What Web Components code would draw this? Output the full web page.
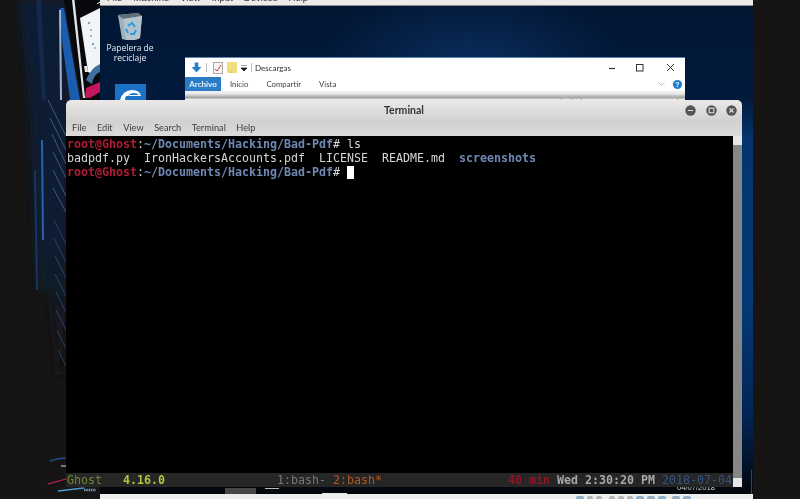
<!DOCTYPE html>
<html>
<head>
<meta charset="utf-8">
<title>Terminal</title>
<style>
html, body { margin: 0; padding: 0; background: #161514; overflow: hidden; }
</style>
</head>
<body>
<x-desktop>
  <x-host-art></x-host-art>
  <x-vm>
    <x-desk-icon label="Papelera de reciclaje"></x-desk-icon>
    <x-explorer></x-explorer>
  </x-vm>
  <x-terminal title="Terminal">
    <x-term-line><b class="r">root@Ghost</b>:<b class="p">~/Documents/Hacking/Bad-Pdf</b># ls</x-term-line>
    <x-term-line>badpdf.py  IronHackersAccounts.pdf  LICENSE  README.md  <b class="p">screenshots</b></x-term-line>
    <x-term-line><b class="r">root@Ghost</b>:<b class="p">~/Documents/Hacking/Bad-Pdf</b># <i class="c"></i></x-term-line>
  </x-terminal>
</x-desktop>

<script>
// outer page, holds everything on a free canvas
class XDesktop extends HTMLElement {
  constructor() {
    super();
    this.attachShadow({mode: "open"}).innerHTML = `
      <style>
        :host { display: block; position: relative; width: 800px; height: 499px; overflow: hidden; background: #161514; filter: blur(0.35px); }
      </style>
      <slot></slot>`;
  }
}

// wallpaper of the real machine, only the strip left of the vm shows
class XHostArt extends HTMLElement {
  constructor() {
    super();
    this.attachShadow({mode: "open"}).innerHTML = `
      <style>
        :host { display: block; position: absolute; left: 0; top: 0; width: 100px; height: 499px; }
        svg { display: block; }
      </style>
      <svg width="100" height="499" viewBox="0 0 100 499">
        <defs>
          <linearGradient id="fade" x1="0" y1="0" x2="0" y2="1">
            <stop offset="0" stop-color="#0c1c34"/><stop offset=".6" stop-color="#0e1d33"/><stop offset="1" stop-color="#151617"/>
          </linearGradient>
          <filter id="soft" x="-30%" y="-10%" width="160%" height="120%"><feGaussianBlur stdDeviation="4"/></filter>
        </defs>
        <rect width="100" height="499" fill="#161514"/>
        <path d="M18 0H66L69 110L66 375H58L50 290H38L33 190L28 90Z" fill="url(#fade)" filter="url(#soft)"/>
        <path d="M60 8L64 8L80 100H70L62 40Z" fill="#1c5cae"/>
        <path d="M36 0L41 0L44 60L46 100L42 100Z" fill="#12294c"/>
        <path d="M41 140L43 140L44 240L42 240Z" fill="#2a60a8"/>
        <path d="M34 170L36 170L38 290L36 290Z" fill="#173560"/>
        <path d="M59 10L61 10L62 100L60 100Z" fill="#9fb4cf"/>
        <g stroke="#54719a" stroke-width="1" opacity=".7">
          <path d="M48 100L66 136M50 118L66 150M52 134L66 164M53 152L66 178M53 170L66 196M53 188L66 212"/>
        </g>
        <g stroke="#2f4a70" stroke-width="1" opacity=".8">
          <path d="M54 220L66 244M54 238L66 262M55 256L66 278M55 274L66 296M56 292L66 312M56 310L66 330M57 330L66 348M58 350L66 366"/>
        </g>
        <path d="M64 0H100V100H82Z" fill="#08090d"/>
        <path d="M72 0H74.5L85 98H83Z" fill="#e2e5e9"/>
        <path d="M80 18L100 8V66L92 74L88 72Z" fill="#f3f4f5"/>
        <g fill="#7ea8d0"><circle cx="89" cy="23" r="1.2"/><circle cx="91" cy="30" r="1"/><circle cx="93" cy="44" r="1.3"/><circle cx="95" cy="48" r="1"/><circle cx="91" cy="36" r="1"/></g>
        <path d="M86 80Q91 68 100 64V72Q94 74 92 84Z" fill="#3f6f9c"/>
        <path d="M86 88L100 82V92L90 98H85Z" fill="#c2185b"/>
        <path d="M84 66L87 66L88 72H85Z" fill="#e6e8ea"/>
        <path d="M97 4L100 2" stroke="#fff" stroke-width="1"/>
        <path d="M50 461Q58 458 66 458" stroke="#1d4f8f" stroke-width="1.5" fill="none"/>
        <path d="M61 466H66" stroke="#d5dbe2" stroke-width="1"/>
        <path d="M48 484L66 479" stroke="#d11f5c" stroke-width="1.2"/>
        <path d="M58 491L84 488" stroke="#4c9ccc" stroke-width="1.5"/>
        <path d="M84 490H96" stroke="#6f9ac0" stroke-width="2.4" stroke-dasharray="1.5 .8"/>
      </svg>`;
  }
}

// the virtual machine window: menu on top, windows desktop, task bar
class XVm extends HTMLElement {
  constructor() {
    super();
    this.attachShadow({mode: "open"}).innerHTML = `
      <style>
        :host { display: flex; flex-direction: column; position: absolute; left: 100px; top: 0; width: 653px; height: 499px; overflow: hidden;
          font-family: "Liberation Sans", sans-serif; }
        .menu { height: 5px; background: #ecebe8; border-bottom: 1px solid #8d8d8d; flex: none; display: flex; align-items: flex-end; gap: 11px; padding-left: 7px; overflow: hidden;
          font-size: 9.5px; line-height: 11px; color: #333; }
        .menu span { flex: none; position: relative; top: -2px; }
        .screen { position: relative; flex: 1; background:
          radial-gradient(ellipse 150px 75px at 370px 55px, #0a2c5a 0%, rgba(8,36,74,0) 100%),
          linear-gradient(180deg, #021633 0, #021a3c 19%, #04346c 27%, #043a78 60%, #022554 84%, #01122a 94%, #050607 100%); }
        .task { flex: none; height: 5px; background: #eceded; display: flex; align-items: flex-start; justify-content: flex-end; gap: 3px; padding-right: 62px; padding-top: 2px; box-sizing: border-box; }
        .task i { width: 8px; height: 3px; border-radius: 2px 2px 0 0; background: #8fb0c8; }
        .task i.g { background: #b5b5b5; width: 6px; }
        .date { position: absolute; right: 38px; bottom: 2px; font-size: 7.6px; line-height: 9px; color: #cfcfcf; }
        .shelf { position: absolute; background: #474747; left: 125px; bottom: 0; width: 31px; height: 6px; }
        .shelf2 { position: absolute; background: #e6e6e6; left: 222px; bottom: 0; width: 25px; height: 1px; }
        .under { position: absolute; background: #b9b9b9; left: 165px; bottom: 5px; width: 14px; height: 1px; }
        .edge { position: absolute; right: 1px; bottom: 0; width: 1px; height: 24px; background: #444; }
      </style>
      <div class="menu"><span>File</span><span>Machine</span><span>View</span><span>Input</span><span>Devices</span><span>Help</span></div>
      <div class="screen">
        <slot></slot>
        <div class="shelf"></div><div class="shelf2"></div><div class="under"></div><div class="edge"></div>
        <div class="date">04/07/2018</div>
      </div>
      <div class="task"><i></i><i class="g"></i><i class="g"></i><i class="g" style="margin-left:4px"></i><i class="g"></i><i class="g"></i><i></i><i></i><i></i><i style="margin-left:3px"></i><i></i></div>`;
  }
}

class XDeskIcon extends HTMLElement {
  constructor() {
    super();
    this.attachShadow({mode: "open"}).innerHTML = `
      <style>
        :host { display: flex; flex-direction: column; align-items: center; position: absolute; left: 0; top: 6px; width: 60px; color: #e8edf2;
          font: 8.5px/10px "Open Sans", sans-serif; text-align: center; }
        svg { display: block; margin-bottom: 3px; }
        .edge { position: absolute; left: 15px; top: 72px; width: 31px; height: 16px; background: #1a72c4; overflow: hidden; }
      </style>
      <svg width="26" height="28" viewBox="0 0 26 28">
        <path d="M1 3L21 1L25 4L23 26Q18 29 9 28L5 27Z" fill="#9fb1bd"/>
        <path d="M1 3L21 1L25 4L6 7Z" fill="#5f6d76"/>
        <path d="M6 7L25 4L23 26Q18 29 9 28Z" fill="#b3c3ce"/>
        <path d="M11 14L15 11L18 15M19 18L17 22L13 22M11 21L9 17" stroke="#2f9bdc" stroke-width="2" fill="none"/>
      </svg>
      <span id="t"></span>
      <div class="edge"><svg width="31" height="16" viewBox="0 0 31 16"><path d="M5 16Q8 6 17 6Q25 6 26 12L12 12Q10 12 10 16Z" fill="#fff"/><path d="M10 16Q13 9 19 9Q22 9 24 11L14 11Z" fill="#1a72c4"/></svg></div>`;
    this.shadowRoot.getElementById("t").textContent = this.getAttribute("label");
  }
}

// file explorer behind the terminal, only its ribbon top is visible
class XExplorer extends HTMLElement {
  constructor() {
    super();
    this.attachShadow({mode: "open"}).innerHTML = `
      <style>
        :host { display: block; position: absolute; left: 85px; top: 51px; width: 500px; height: 44px; overflow: hidden; background: #fff; border-top: 1px solid #5a86b4; box-sizing: border-box;
          font: 8px Lato, sans-serif; color: #333; }
        .title { height: 19px; display: flex; align-items: center; gap: 4px; padding-left: 6px; }
        .title .sep { width: 1px; height: 9px; background: #bbb; }
        .name { font-size: 8px; margin-left: -1px; }
        .ctl { margin-left: auto; display: flex; align-items: center; gap: 17px; padding-right: 10px; }
        .tabs { height: 14px; display: flex; align-items: center; }
        .tabs span { margin-left: 18px; color: #444; flex: none; font-size: 7.8px; }
        .tabs span.a { background: #2a7cc6; color: #e8f2fb; margin-left: 0; width: 36px; height: 14px; line-height: 14px; text-align: center; font-weight: 700; font-size: 8px; }
        .tabs span.i { margin-left: 9px; }
        .tail { margin-left: auto; display: flex; align-items: center; gap: 8px; padding-right: 3px; }
        .help { width: 9px; height: 9px; border-radius: 50%; background: #1f7ccc; color: #fff; font: bold 7px/9px "Liberation Sans", sans-serif; text-align: center; }
        .band { height: 9px; background: linear-gradient(180deg, #eee 0, #eee 2px, #e2e2e2 3px, #9a9a9a 7px, #e9e9e9 8px); position: relative; }
        .box { position: absolute; top: 6px; height: 6px; border: 1px solid #aaa; box-sizing: border-box; }
      </style>
      <div class="title">
        <svg width="11" height="12" viewBox="0 0 12 12"><path d="M4 0H8V5H11.5L6 11L.5 5H4Z" fill="#2a7fc9"/></svg>
        <div class="sep"></div>
        <svg width="10" height="12" viewBox="0 0 10 12" style="margin-left:2px"><rect x=".5" y=".5" width="9" height="11" fill="#f5f5f5" stroke="#aaa"/><path d="M2 7L4 9L8 3" stroke="#d33" fill="none"/></svg>
        <svg width="10" height="11" viewBox="0 0 10 11"><rect width="10" height="11" fill="#f1dd7c"/><path d="M2 10H8" stroke="#cbb455" stroke-dasharray="1 1"/></svg>
        <svg width="6" height="6" viewBox="0 0 6 6"><path d="M0 0H6M0 3H6L3 6Z" stroke="#222" stroke-width=".8" fill="#222"/></svg>
        <div class="sep"></div>
        <span class="name">Descargas</span>
        <div class="ctl">
          <svg width="8" height="8" viewBox="0 0 8 8"><path d="M1 4.5H7" stroke="#333" stroke-width="1.2"/></svg>
          <svg width="8" height="8" viewBox="0 0 8 8" style="margin-left:3px"><rect x=".5" y=".5" width="6.5" height="6.5" fill="none" stroke="#333"/></svg>
          <svg width="9" height="9" viewBox="0 0 9 9" style="margin-left:5px"><path d="M1 1L8 8M8 1L1 8" stroke="#333"/></svg>
        </div>
      </div>
      <div class="tabs">
        <span class="a">Archivo</span><span class="i">Inicio</span><span>Compartir</span><span>Vista</span>
        <div class="tail">
          <svg width="7" height="5" viewBox="0 0 7 5"><path d="M.5 .5L3.5 3.5L6.5 .5" stroke="#bbb" fill="none"/></svg>
          <div class="help">?</div>
        </div>
      </div>
      <div class="band">
        <div class="box" style="left:376px;width:11px"></div>
        <div class="box" style="left:396px;width:97px"></div>
      </div>`;
  }
}

// terminal window, lines come in by the slot, status bar is tmux
class XTerminal extends HTMLElement {
  constructor() {
    super();
    this.attachShadow({mode: "open"}).innerHTML = `
      <style>
        :host { display: flex; flex-direction: column; position: absolute; left: 66px; top: 100px; width: 676px; height: 387px; border-radius: 5px 5px 0 0; overflow: hidden; }
        .head { flex: none; height: 36px; background: linear-gradient(180deg, #eae9e7 0, #d2d1cf 60%, #dcdbd9 100%); display: flex; flex-direction: column; font-family: Lato, sans-serif; color: #3c3c3c; }
        .bar { height: 20px; flex: none; display: flex; align-items: center; justify-content: center; position: relative; box-sizing: border-box; font-size: 10.5px; font-weight: 700; color: #333; }
        .btns { position: absolute; right: 5px; top: 5px; display: flex; gap: 9.5px; }
        .btns svg { display: block; }
        .menu { display: flex; padding: 1px 0 0 6px; font-size: 9.2px; line-height: 14px; gap: 10.5px; }
        .body { flex: 1; display: flex; min-height: 0; }
        .screen { flex: 1; display: flex; flex-direction: column; background: #000; min-width: 0; font: 11.63px/14px "DejaVu Sans Mono", monospace; color: #d6d6d6; }
        .lines { flex: 1; padding: 1px 0 0 1px; }
        .scroll { flex: none; width: 9px; background: #868686; display: flex; flex-direction: column; justify-content: space-between; }
        .scroll i { display: block; height: 9px; background: #e6e6e6; }
      </style>
      <div class="head">
        <div class="bar"><span id="t"></span>
          <div class="btns">
            <svg width="11" height="11" viewBox="0 0 11 11"><circle cx="5.5" cy="5.5" r="5.2" fill="#555"/><path d="M3 5.5H8" stroke="#ddd" stroke-width="1.2"/></svg>
            <svg width="11" height="11" viewBox="0 0 11 11"><circle cx="5.5" cy="5.5" r="5.2" fill="#555"/><rect x="3.2" y="3.2" width="4.6" height="4.6" fill="none" stroke="#ddd" stroke-width="1.1"/></svg>
            <svg width="11" height="11" viewBox="0 0 11 11"><circle cx="5.5" cy="5.5" r="5.2" fill="#555"/><path d="M3.5 3.5L7.5 7.5M7.5 3.5L3.5 7.5" stroke="#ddd" stroke-width="1.2"/></svg>
          </div>
        </div>
        <div class="menu"><span>File</span><span>Edit</span><span>View</span><span>Search</span><span>Terminal</span><span>Help</span></div>
      </div>
      <div class="body">
        <div class="screen">
          <div class="lines"><slot></slot></div>
          <x-tmux-bar></x-tmux-bar>
        </div>
        <div class="scroll"><i></i><i></i></div>
      </div>`;
    this.shadowRoot.getElementById("t").textContent = this.getAttribute("title");
  }
}

class XTermLine extends HTMLElement {
  constructor() {
    super();
    this.attachShadow({mode: "open"}).innerHTML = `
      <style>
        :host { display: block; height: 14px; }
        .row { white-space: pre; }
        ::slotted(b) { font-weight: bold; }
        ::slotted(b.r) { color: #b01c34; }
        ::slotted(b.p) { color: #6f88b4; }
        ::slotted(i.c) { display: inline-block; width: 7px; height: 13px; background: #fff; vertical-align: -3px; }
      </style>
      <div class="row"><slot></slot></div>`;
  }
}

class XTmuxBar extends HTMLElement {
  constructor() {
    super();
    this.attachShadow({mode: "open"}).innerHTML = `
      <style>
        :host { display: block; flex: none; height: 14px; background: #262626; padding-left: 1px; }
        .row { white-space: pre; }
        b { font-weight: bold; }
        .host { color: #6d8534; }
        .ver { color: #b3c33c; }
        .win { color: #787878; }
        .cur { color: #b2571f; }
        .idle { color: #8c1527; }
        .time { color: #a8a8a8; }
        .date { color: #36527f; }
      </style>
      <div class="row"><span class="host">Ghost</span>   <b class="ver">4.16.0</b>                <span class="win">1:bash-</span> <span class="cur">2:bash*</span>                  <b class="idle">40 min</b> <b class="time">Wed 2:30:20 PM</b> <span class="date">2018-07-04</span></div>`;
  }
}

customElements.define("x-desktop", XDesktop);
customElements.define("x-host-art", XHostArt);
customElements.define("x-vm", XVm);
customElements.define("x-desk-icon", XDeskIcon);
customElements.define("x-explorer", XExplorer);
customElements.define("x-terminal", XTerminal);
customElements.define("x-term-line", XTermLine);
customElements.define("x-tmux-bar", XTmuxBar);
</script>
</body>
</html>
